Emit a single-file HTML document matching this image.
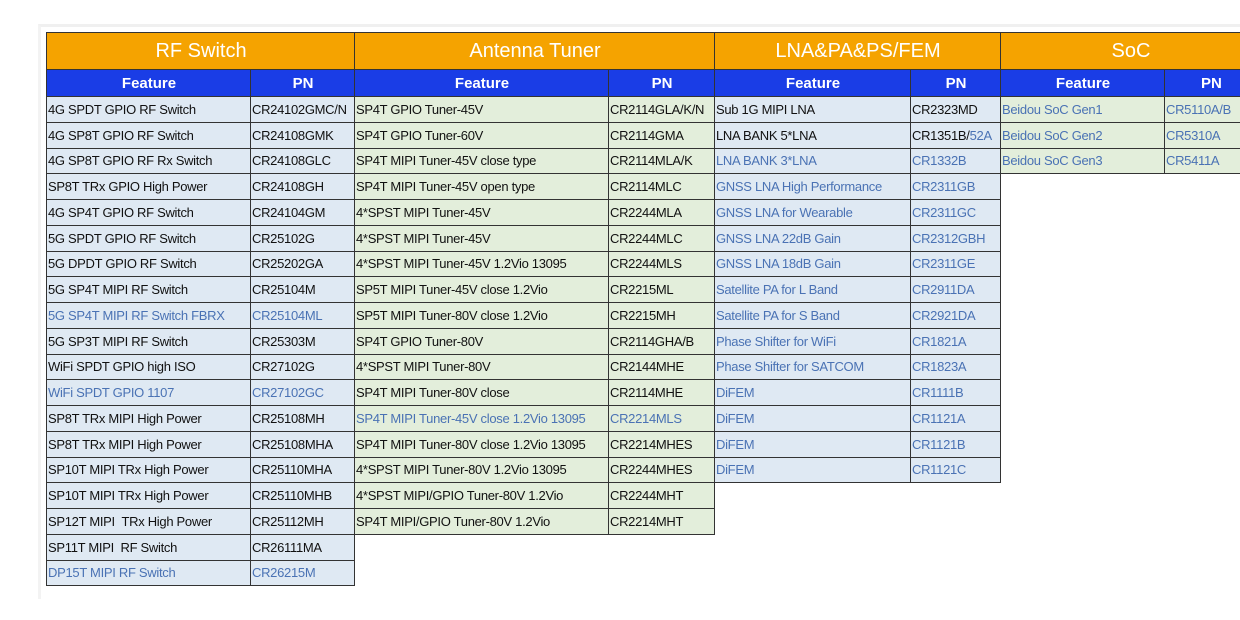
<!DOCTYPE html>
<html><head><meta charset="utf-8"><style>
body{margin:0;width:1240px;height:620px;background:#fff;overflow:hidden;font-family:"Liberation Sans","Noto Sans CJK SC",sans-serif;position:relative}
.bg{position:absolute;left:38px;top:24px;width:1202px;height:572px;background:#fff;border-top:3px solid #f0f0f0;border-left:3px solid #f3f3f3}
table{position:absolute;top:32px;border-collapse:collapse;table-layout:fixed}
td,th{border:1.5px solid #333;padding:0 0 0 1px;white-space:nowrap;overflow:hidden;font-size:13px;letter-spacing:-0.3px;color:#111;text-align:left}
th.h{background:#f5a300;color:#fff;font-size:20px;font-weight:normal;letter-spacing:0;text-align:center;height:36px}
th.s{background:#1a3de6;color:#fff;font-size:15px;font-weight:bold;letter-spacing:0;text-align:center;height:26px}
.b td{background:#dfe9f3}
.g td{background:#e3eedb}
td{height:24.75px}
.u{color:#4a72b4}
</style></head><body>
<div class="bg"></div>
<table class="b" style="left:46px;width:308px">
<col style="width:204px"><col style="width:104px">
<tr><th class="h" colspan="2">RF Switch</th></tr>
<tr><th class="s">Feature</th><th class="s">PN</th></tr>
<tr><td>4G SPDT GPIO RF Switch</td><td>CR24102GMC/N</td></tr>
<tr><td>4G SP8T GPIO RF Switch</td><td>CR24108GMK</td></tr>
<tr><td>4G SP8T GPIO RF Rx Switch</td><td>CR24108GLC</td></tr>
<tr><td>SP8T TRx GPIO High Power</td><td>CR24108GH</td></tr>
<tr><td>4G SP4T GPIO RF Switch</td><td>CR24104GM</td></tr>
<tr><td>5G SPDT GPIO RF Switch</td><td>CR25102G</td></tr>
<tr><td>5G DPDT GPIO RF Switch</td><td>CR25202GA</td></tr>
<tr><td>5G SP4T MIPI RF Switch</td><td>CR25104M</td></tr>
<tr><td class="u">5G SP4T MIPI RF Switch FBRX</td><td class="u">CR25104ML</td></tr>
<tr><td>5G SP3T MIPI RF Switch</td><td>CR25303M</td></tr>
<tr><td>WiFi SPDT GPIO high ISO</td><td>CR27102G</td></tr>
<tr><td class="u">WiFi SPDT GPIO 1107</td><td class="u">CR27102GC</td></tr>
<tr><td>SP8T TRx MIPI High Power</td><td>CR25108MH</td></tr>
<tr><td>SP8T TRx MIPI High Power</td><td>CR25108MHA</td></tr>
<tr><td>SP10T MIPI TRx High Power</td><td>CR25110MHA</td></tr>
<tr><td>SP10T MIPI TRx High Power</td><td>CR25110MHB</td></tr>
<tr><td>SP12T MIPI &nbsp;TRx High Power</td><td>CR25112MH</td></tr>
<tr><td>SP11T MIPI &nbsp;RF Switch</td><td>CR26111MA</td></tr>
<tr><td class="u">DP15T MIPI RF Switch</td><td class="u">CR26215M</td></tr>
</table>
<table class="g" style="left:354px;width:360px">
<col style="width:254px"><col style="width:106px">
<tr><th class="h" colspan="2">Antenna Tuner</th></tr>
<tr><th class="s">Feature</th><th class="s">PN</th></tr>
<tr><td>SP4T GPIO Tuner-45V</td><td>CR2114GLA/K/N</td></tr>
<tr><td>SP4T GPIO Tuner-60V</td><td>CR2114GMA</td></tr>
<tr><td>SP4T MIPI Tuner-45V close type</td><td>CR2114MLA/K</td></tr>
<tr><td>SP4T MIPI Tuner-45V open type</td><td>CR2114MLC</td></tr>
<tr><td>4*SPST MIPI Tuner-45V</td><td>CR2244MLA</td></tr>
<tr><td>4*SPST MIPI Tuner-45V</td><td>CR2244MLC</td></tr>
<tr><td>4*SPST MIPI Tuner-45V 1.2Vio 13095</td><td>CR2244MLS</td></tr>
<tr><td>SP5T MIPI Tuner-45V close 1.2Vio</td><td>CR2215ML</td></tr>
<tr><td>SP5T MIPI Tuner-80V close 1.2Vio</td><td>CR2215MH</td></tr>
<tr><td>SP4T GPIO Tuner-80V</td><td>CR2114GHA/B</td></tr>
<tr><td>4*SPST MIPI Tuner-80V</td><td>CR2144MHE</td></tr>
<tr><td>SP4T MIPI Tuner-80V close</td><td>CR2114MHE</td></tr>
<tr><td class="u">SP4T MIPI Tuner-45V close 1.2Vio 13095</td><td class="u">CR2214MLS</td></tr>
<tr><td>SP4T MIPI Tuner-80V close 1.2Vio 13095</td><td>CR2214MHES</td></tr>
<tr><td>4*SPST MIPI Tuner-80V 1.2Vio 13095</td><td>CR2244MHES</td></tr>
<tr><td>4*SPST MIPI/GPIO Tuner-80V 1.2Vio</td><td>CR2244MHT</td></tr>
<tr><td>SP4T MIPI/GPIO Tuner-80V 1.2Vio</td><td>CR2214MHT</td></tr>
</table>
<table class="b" style="left:714px;width:286px">
<col style="width:196px"><col style="width:90px">
<tr><th class="h" colspan="2">LNA&amp;PA&amp;PS/FEM</th></tr>
<tr><th class="s">Feature</th><th class="s">PN</th></tr>
<tr><td>Sub 1G MIPI LNA</td><td>CR2323MD</td></tr>
<tr><td>LNA BANK 5*LNA</td><td>CR1351B/<span class="u">52A</span></td></tr>
<tr><td class="u">LNA BANK 3*LNA</td><td class="u">CR1332B</td></tr>
<tr><td class="u">GNSS LNA High Performance</td><td class="u">CR2311GB</td></tr>
<tr><td class="u">GNSS LNA for Wearable</td><td class="u">CR2311GC</td></tr>
<tr><td class="u">GNSS LNA 22dB Gain</td><td class="u">CR2312GBH</td></tr>
<tr><td class="u">GNSS LNA 18dB Gain</td><td class="u">CR2311GE</td></tr>
<tr><td class="u">Satellite PA for L Band</td><td class="u">CR2911DA</td></tr>
<tr><td class="u">Satellite PA for S Band</td><td class="u">CR2921DA</td></tr>
<tr><td class="u">Phase Shifter for WiFi</td><td class="u">CR1821A</td></tr>
<tr><td class="u">Phase Shifter for SATCOM</td><td class="u">CR1823A</td></tr>
<tr><td class="u">DiFEM</td><td class="u">CR1111B</td></tr>
<tr><td class="u">DiFEM</td><td class="u">CR1121A</td></tr>
<tr><td class="u">DiFEM</td><td class="u">CR1121B</td></tr>
<tr><td class="u">DiFEM</td><td class="u">CR1121C</td></tr>
</table>
<table class="g" style="left:1000px;width:260px">
<col style="width:164px"><col style="width:96px">
<tr><th class="h" colspan="2">SoC</th></tr>
<tr><th class="s">Feature</th><th class="s" style="text-align:left;padding-left:36px">PN</th></tr>
<tr><td class="u">Beidou SoC Gen1</td><td class="u">CR5110A/B</td></tr>
<tr><td class="u">Beidou SoC Gen2</td><td class="u">CR5310A</td></tr>
<tr><td class="u">Beidou SoC Gen3</td><td class="u">CR5411A</td></tr>
</table>
</body></html>
